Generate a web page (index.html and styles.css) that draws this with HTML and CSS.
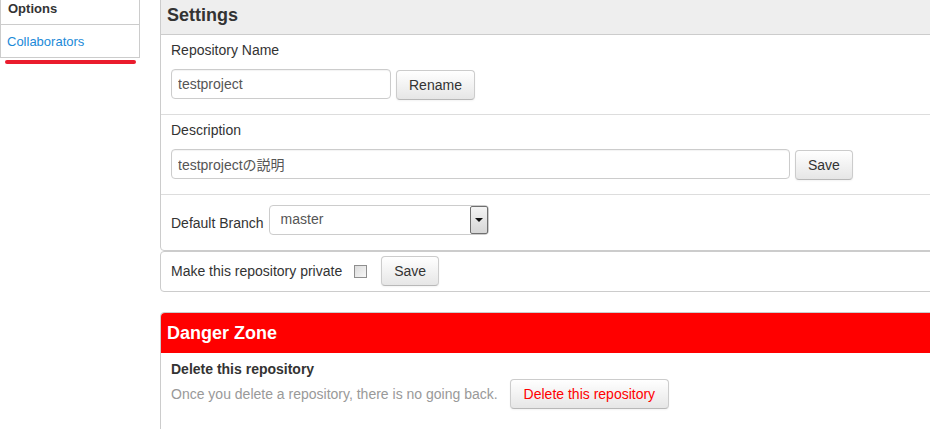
FILE: index.html
```html
<!DOCTYPE html>
<html lang="ja">
<head>
<meta charset="utf-8">
<title>Settings</title>
<link rel="stylesheet" href="styles.css">
</head>
<body>
<div class="page">
  <aside class="sidebar">
    <div class="side-box">
      <div class="side-head">Options</div>
      <a class="side-item" href="#">Collaborators</a>
    </div>
    <div class="underline"></div>
  </aside>
  <main class="main">
    <section class="box">
      <div class="box-head">Settings</div>
      <div class="row">
        <div class="label">Repository Name</div>
        <div class="field-line">
          <input class="input input-short" type="text" value="testproject">
          <button class="btn" type="button">Rename</button>
        </div>
      </div>
      <div class="row">
        <div class="label">Description</div>
        <div class="field-line">
          <input class="input input-long" type="text" value="testprojectの説明">
          <button class="btn" type="button">Save</button>
        </div>
      </div>
      <div class="row row-inline">
        <span class="label label-inline">Default Branch</span>
        <span class="select-wrap">
          <span class="select-text">master</span>
          <span class="select-arrow"><span class="tri"></span></span>
        </span>
      </div>
    </section>
    <section class="box box-private">
      <span class="label">Make this repository private</span>
      <span class="checkbox"></span>
      <button class="btn" type="button">Save</button>
    </section>
    <section class="box box-danger">
      <div class="box-head danger-head">Danger Zone</div>
      <div class="danger-body">
        <div class="danger-title">Delete this repository</div>
        <div class="danger-line">
          <span class="muted">Once you delete a repository, there is no going back.</span>
          <button class="btn btn-danger" type="button">Delete this repository</button>
        </div>
      </div>
    </section>
  </main>
</div>
</body>
</html>
```

FILE: styles.css
```css
html, body {
  margin: 0;
  padding: 0;
  background: #fff;
  overflow: hidden;
}
body {
  font-family: "Liberation Sans", Arial, "Noto Sans CJK JP", sans-serif;
  font-size: 14px;
  color: #333;
}
.page {
  display: flex;
  align-items: flex-start;
  gap: 20px;
  margin-top: -12px;
}
.sidebar {
  flex: none;
  width: 140px;
}
.side-box {
  border: 1px solid #ccc;
  background: #fff;
}
.side-head {
  font-size: 13px;
  font-weight: bold;
  line-height: 20px;
  padding: 10px 7px 5px;
  border-bottom: 1px solid #ccc;
  color: #333;
}
.side-item {
  display: block;
  font-size: 13px;
  line-height: 20px;
  padding: 7px 6px 5px;
  color: #1b8ad8;
  text-decoration: none;
}
.underline {
  height: 4px;
  border-radius: 2px;
  background: #ea1c2d;
  margin: 2px 4px 0 5px;
}
.main {
  flex: none;
  width: 800px;
}
.box {
  border: 1px solid #ccc;
  border-radius: 4px;
  background: #fff;
}
.box-head {
  background: #eee;
  border-bottom: 1px solid #ccc;
  font-size: 18px;
  font-weight: bold;
  line-height: 22px;
  padding: 15px 6px 8px;
  color: #333;
  border-radius: 4px 4px 0 0;
}
.row {
  padding: 5px 10px 15px;
  border-bottom: 1px solid #ddd;
}
.row:last-child {
  border-bottom: none;
}
.label {
  line-height: 20px;
  color: #333;
}
.row > .label {
  margin-bottom: 9px;
}
.field-line {
  display: flex;
  align-items: flex-start;
  gap: 5px;
  height: 30px;
}
.input {
  box-sizing: border-box;
  height: 30px;
  border: 1px solid #ccc;
  border-radius: 4px;
  padding: 0 6px;
  font-family: inherit;
  font-size: 14px;
  color: #555;
  background: #fff;
  box-shadow: inset 0 1px 1px rgba(0,0,0,0.05);
  margin: 0;
}
.input-short { width: 220px; }
.input-long { width: 619px; }
.btn {
  box-sizing: border-box;
  height: 30px;
  padding: 0 12px;
  margin: 0;
  font-family: inherit;
  font-size: 14px;
  color: #333;
  border: 1px solid #ccc;
  border-bottom-color: #b8b8b8;
  border-radius: 4px;
  background: linear-gradient(#ffffff, #e6e6e6);
  box-shadow: inset 0 1px 0 rgba(255,255,255,0.3), 0 1px 2px rgba(0,0,0,0.05);
}
.field-line .btn { margin-top: 1px; }
.row-inline {
  display: flex;
  align-items: center;
  padding-top: 10px;
  padding-bottom: 15px;
}
.row > .label-inline {
  padding-top: 5px;
  margin: 0 5px 0 0;
}
.select-wrap {
  position: relative;
  box-sizing: border-box;
  width: 220px;
  height: 30px;
  border: 1px solid #ccc;
  border-radius: 4px;
  background: #fff;
  display: flex;
  align-items: flex-start;
}
.select-text {
  padding: 4px 0 0 11px;
  line-height: 18px;
  color: #555;
}
.select-arrow {
  position: absolute;
  top: 0;
  right: 0;
  box-sizing: border-box;
  width: 18px;
  height: 28px;
  border: 1px solid #6f6f6f;
  border-radius: 2px;
  background: linear-gradient(#f4f4f4, #d6d6d6);
  display: flex;
  align-items: center;
  justify-content: center;
}
.tri {
  width: 0;
  height: 0;
  border-left: 4px solid transparent;
  border-right: 4px solid transparent;
  border-top: 4px solid #111;
}
.box-private {
  display: flex;
  align-items: center;
  padding: 4px 10px 5px;
}
.checkbox {
  box-sizing: border-box;
  width: 13px;
  height: 13px;
  border: 1px solid #8f8f8f;
  background: linear-gradient(135deg, #dcdcdc, #f7f7f7);
  margin-left: 12px;
  margin-right: 14px;
}
.box-danger {
  margin-top: 20px;
  height: 140px;
}
.danger-head {
  background: #ff0000;
  color: #fff;
  border-bottom: none;
  padding: 9px 6px 9px;
}
.danger-body {
  padding: 6px 10px 0;
}
.danger-title {
  font-weight: bold;
  line-height: 20px;
  color: #333;
}
.danger-line {
  display: flex;
  align-items: center;
  gap: 12px;
  height: 30px;
}
.muted {
  color: #999;
}
.btn-danger {
  color: #f00;
  padding: 0 13px;
}
```
